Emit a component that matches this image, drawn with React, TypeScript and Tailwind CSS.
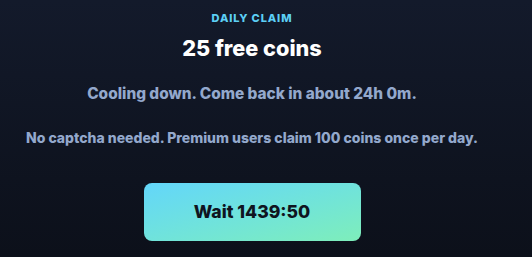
import React from 'react';

const App: React.FC = () => {
    return (
        <div className="min-h-[257px] w-full bg-gradient-to-b from-[#131a2b] to-[#0c101a] flex flex-col items-center pt-[11px] pr-[28px] font-['Inter',sans-serif]">
            <p className="text-[11px] font-extrabold uppercase tracking-[0.08em] text-[#5ccff5] leading-[14px]">Daily claim</p>
            <h2 className="mt-[9px] text-[21.7px] font-extrabold text-white leading-[28px]">25 free coins</h2>
            <p className="mt-[22px] text-[15.4px] font-extrabold text-[#93a8cc] leading-[20px]">
                Cooling down. Come back in about 24h 0m.
            </p>
            <p className="mt-[25px] text-[14px] font-extrabold text-[#93a8cc] leading-[18px]">
                No captcha needed. Premium users claim 100 coins once per day.
            </p>
            <button className="mt-[36px] w-[217px] h-[58px] rounded-lg bg-gradient-to-br from-[#63d6fa] to-[#7eeeba] text-[17.6px] font-extrabold text-[#0f1420]">
                Wait 1439:50
            </button>
        </div>
    );
};

export default App;
